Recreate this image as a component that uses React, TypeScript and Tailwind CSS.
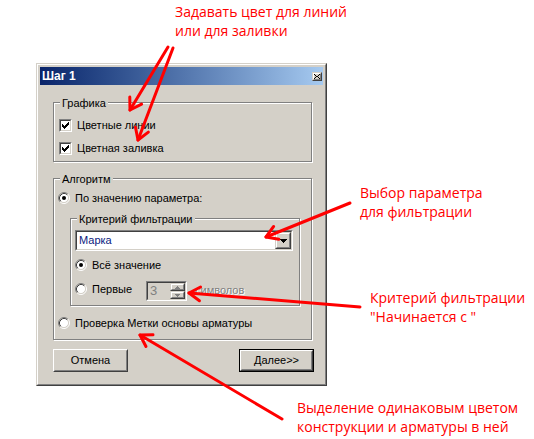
import React from 'react';

type Pt = [number, number];

// red callout arrows: [from, to]
const arrows: [Pt, Pt][] = [
  [[168, 47], [130, 110]],
  [[173, 48], [138, 140]],
  [[350, 203], [266, 237]],
  [[360, 307], [189, 293]],
  [[282, 419], [140, 335]],
];

const arrowHead = ([sx, sy]: Pt, [tx, ty]: Pt) => {
  const a = Math.atan2(sy - ty, sx - tx);
  const r = (32 * Math.PI) / 180;
  const len = 13;
  const p1 = [tx + len * Math.cos(a + r), ty + len * Math.sin(a + r)];
  const p2 = [tx + len * Math.cos(a - r), ty + len * Math.sin(a - r)];
  return `M${p1[0]} ${p1[1]} L${tx} ${ty} L${p2[0]} ${p2[1]}`;
};

const CheckBox = () => (
  <span className="w-[13px] h-[13px] flex border border-t-[#808080] border-l-[#808080] border-r-white border-b-white">
    <span className="flex-1 flex items-center justify-center bg-white border border-t-[#404040] border-l-[#404040] border-r-[#d4d0c8] border-b-[#d4d0c8]">
      <svg width="7" height="7" viewBox="0 0 7 7" shapeRendering="crispEdges">
        <rect x="6" y="0" width="1" height="1" />
        <rect x="5" y="1" width="2" height="1" />
        <rect x="0" y="2" width="1" height="1" />
        <rect x="4" y="2" width="3" height="1" />
        <rect x="0" y="3" width="2" height="1" />
        <rect x="3" y="3" width="3" height="1" />
        <rect x="0" y="4" width="5" height="1" />
        <rect x="1" y="5" width="3" height="1" />
        <rect x="2" y="6" width="1" height="1" />
      </svg>
    </span>
  </span>
);

const Radio = ({ checked }: { checked?: boolean }) => (
  <svg width="12" height="12" viewBox="0 0 12 12" className="shrink-0">
    <circle cx="6" cy="6" r="4.5" fill="#fff" />
    <path d="M2.11 9.89 A5.5 5.5 0 0 1 9.89 2.11" stroke="#808080" fill="none" />
    <path d="M9.89 2.11 A5.5 5.5 0 0 1 2.11 9.89" stroke="#fff" fill="none" />
    <path d="M2.82 9.18 A4.5 4.5 0 0 1 9.18 2.82" stroke="#404040" fill="none" />
    <path d="M9.18 2.82 A4.5 4.5 0 0 1 2.82 9.18" stroke="#d4d0c8" fill="none" />
    {checked && <circle cx="6" cy="6" r="2" fill="#000" />}
  </svg>
);

const GroupBox = ({ title, className, children }: { title: string; className: string; children: React.ReactNode }) => (
  <div className={`border border-[#808080] shadow-[inset_1px_1px_0_#ffffff,1px_1px_0_#ffffff] ${className}`}>
    <div className="flex -mt-[6px] h-[13px]">
      <span className="ml-[6px] px-[2px] bg-[#d4d0c8] leading-[13px]">{title}</span>
    </div>
    {children}
  </div>
);

const Button = ({ label, isDefault }: { label: string; isDefault?: boolean }) => (
  <div className={`w-[75px] h-[23px] flex ${isDefault ? 'border border-black' : ''}`}>
    <div className="flex-1 flex border border-t-white border-l-white border-r-[#404040] border-b-[#404040]">
      <div className="flex-1 flex items-center justify-center border border-t-[#d4d0c8] border-l-[#d4d0c8] border-r-[#808080] border-b-[#808080]">
        {label}
      </div>
    </div>
  </div>
);

const Raised = ({ className, children }: { className: string; children?: React.ReactNode }) => (
  <div className={`flex border border-t-[#d4d0c8] border-l-[#d4d0c8] border-r-[#404040] border-b-[#404040] ${className}`}>
    <div className="flex-1 flex items-center justify-center bg-[#d4d0c8] border border-t-white border-l-white border-r-[#808080] border-b-[#808080]">
      {children}
    </div>
  </div>
);

export default function App() {
  return (
    <div className="relative w-[534px] h-[439px] overflow-hidden bg-white">
      {/* top callout */}
      <div className="pl-[175px] pt-[2px] font-['Open_Sans',sans-serif] text-[14px] leading-[19px] text-[#ff0000]">
        <p>Задавать цвет для линий</p>
        <p>или для заливки</p>
      </div>

      <div className="flex mt-[23px]">
        {/* dialog */}
        <div className="ml-[36px] w-[291px] h-[323px] bg-[#d4d0c8] border border-t-[#d4d0c8] border-l-[#d4d0c8] border-r-[#404040] border-b-[#404040] font-['Liberation_Sans',Arial,sans-serif] text-[11px] text-black">
          <div className="h-full flex flex-col p-[2px] border border-t-white border-l-white border-r-[#808080] border-b-[#808080]">
            <div className="h-[18px] flex items-center justify-between pl-[2px] pr-[1px] bg-linear-to-r from-[#0a246a] to-[#a6caf0]">
              <span className="text-white font-bold text-[12px] leading-[14px]">Шаг 1</span>
              <Raised className="w-[10px] h-[9px]">
                <svg width="6" height="5" viewBox="0 0 6 5" shapeRendering="crispEdges">
                  <path d="M0 0h1v1h-1zM5 0h1v1h-1zM1 1h1v1h-1zM4 1h1v1h-1zM2 2h2v1h-2zM1 3h1v1h-1zM4 3h1v1h-1zM0 4h1v1h-1zM5 4h1v1h-1z" fill="#000" />
                </svg>
              </Raised>
            </div>

            <div className="flex flex-col pl-[13px]">
              <GroupBox title="Графика" className="mt-[17px] w-[259px] h-[60px]">
                <div className="flex items-center h-[13px] mt-[9px] pl-[5px] leading-[13px]">
                  <CheckBox />
                  <span className="ml-[5px]">Цветные линии</span>
                </div>
                <div className="flex items-center h-[13px] mt-[10px] pl-[5px] leading-[13px]">
                  <CheckBox />
                  <span className="ml-[5px]">Цветная заливка</span>
                </div>
              </GroupBox>

              <GroupBox title="Алгоритм" className="mt-[16px] w-[259px] h-[162px]">
                <div className="flex items-center h-[12px] mt-[6px] pl-[4px] leading-[12px]">
                  <Radio checked />
                  <span className="ml-[5px]">По значению параметра:</span>
                </div>

                <GroupBox title="Критерий фильтрации" className="mt-[14px] ml-[16px] w-[230px] h-[88px]">
                  <div className="mt-[4px] ml-[4px] w-[218px] h-[21px] flex border border-t-[#808080] border-l-[#808080] border-r-white border-b-white">
                    <div className="flex-1 flex items-center bg-white border border-t-[#404040] border-l-[#404040] border-r-[#d4d0c8] border-b-[#d4d0c8]">
                      <span className="flex-1 pl-[2px] text-[#0a1a80]">Марка</span>
                      <Raised className="w-[16px] h-full">
                        <svg width="7" height="4" viewBox="0 0 7 4" shapeRendering="crispEdges">
                          <path d="M0 0h7v1h-7zM1 1h5v1h-5zM2 2h3v1h-3zM3 3h1v1h-1z" fill="#000" />
                        </svg>
                      </Raised>
                    </div>
                  </div>

                  <div className="flex items-center h-[12px] mt-[8px] ml-[4px] leading-[12px]">
                    <Radio checked />
                    <span className="ml-[5px]">Всё значение</span>
                  </div>

                  <div className="flex items-start h-[20px] mt-[10px] ml-[4px]">
                    <div className="mt-[2px]"><Radio /></div>
                    <span className="mt-[2px] ml-[5px] w-[54px] leading-[12px]">Первые</span>
                    <div className="w-[41px] h-[20px] flex border border-t-[#808080] border-l-[#808080] border-r-white border-b-white">
                      <div className="flex-1 flex bg-[#d4d0c8] border border-t-[#404040] border-l-[#404040] border-r-[#d4d0c8] border-b-[#d4d0c8]">
                        <span className="flex-1 pl-[2px] text-[13px] leading-[16px] text-[#808080]">3</span>
                        <div className="w-[15px] flex flex-col">
                          <Raised className="flex-1">
                            <svg width="5" height="3" viewBox="0 0 5 3" shapeRendering="crispEdges">
                              <path d="M2 0h1v1h-1zM1 1h3v1h-3zM0 2h5v1h-5z" fill="#808080" />
                            </svg>
                          </Raised>
                          <Raised className="flex-1">
                            <svg width="5" height="3" viewBox="0 0 5 3" shapeRendering="crispEdges">
                              <path d="M0 0h5v1h-5zM1 1h3v1h-3zM2 2h1v1h-1z" fill="#808080" />
                            </svg>
                          </Raised>
                        </div>
                      </div>
                    </div>
                    <span className="mt-[3px] ml-[8px] leading-[12px] text-[#808080] [text-shadow:1px_1px_0_#ffffff]">символов</span>
                  </div>
                </GroupBox>

                <div className="flex items-center h-[12px] mt-[11px] pl-[4px] leading-[12px]">
                  <Radio />
                  <span className="ml-[5px]">Проверка Метки основы арматуры</span>
                </div>
              </GroupBox>

              <div className="mt-[9px] w-[261px] flex justify-between">
                <Button label="Отмена" />
                <Button label="Далее>>" isDefault />
              </div>
            </div>
          </div>
        </div>

        {/* right callouts */}
        <div className="flex flex-col font-['Open_Sans',sans-serif] text-[14px] leading-[19px] text-[#ff0000]">
          <div className="mt-[120px] ml-[33px]">
            <p>Выбор параметра</p>
            <p>для фильтрации</p>
          </div>
          <div className="mt-[67px] ml-[43px]">
            <p>Критерий фильтрации</p>
            <p>"Начинается с "</p>
          </div>
        </div>
      </div>

      {/* bottom callout */}
      <div className="mt-[12px] pl-[297px] font-['Open_Sans',sans-serif] text-[14px] leading-[19px] text-[#ff0000]">
        <p>Выделение одинаковым цветом</p>
        <p>конструкции и арматуры в ней</p>
      </div>

      <svg className="absolute inset-0 pointer-events-none" width="534" height="439">
        {arrows.map(([s, t], i) => (
          <g key={i} stroke="#ff0000" strokeWidth="3" strokeLinecap="round" strokeLinejoin="round" fill="none">
            <path d={`M${s[0]} ${s[1]} L${t[0]} ${t[1]}`} />
            <path d={arrowHead(s, t)} />
          </g>
        ))}
      </svg>
    </div>
  );
}
